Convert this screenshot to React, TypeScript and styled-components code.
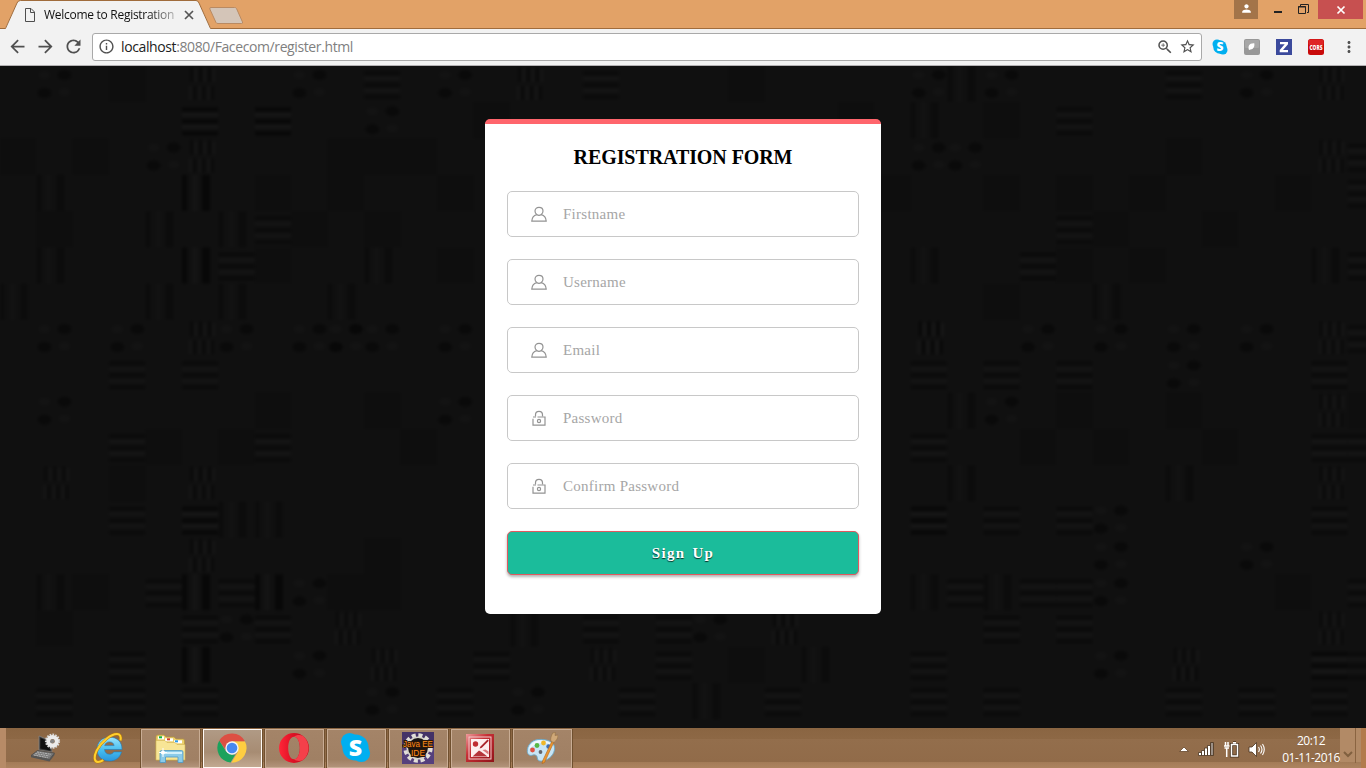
import React from 'react';
import styled, { createGlobalStyle } from 'styled-components';
import { MdArrowBack, MdArrowForward, MdRefresh, MdInfoOutline, MdZoomIn, MdStarBorder, MdMoreVert, MdPerson } from 'react-icons/md';

const GlobalStyle = createGlobalStyle`
  * { box-sizing: border-box; }
  body { margin: 0; overflow: hidden; background: #101010; }
  svg { display: block; flex: none; }
`;

const Screen = styled.div`
  width: 1366px;
  height: 768px;
  display: flex;
  flex-direction: column;
  overflow: hidden;
`;

/* ---------- browser chrome ---------- */

const TitleBar = styled.header`
  height: 29px;
  flex: none;
  display: flex;
  align-items: flex-start;
  background: #e2a267;
  box-shadow: inset 0 -1px 0 #a06c3c;
`;

const Tab = styled.div`
  position: relative;
  width: 209px;
  height: 29px;
  padding: 1px 0 0 25px;
  display: flex;
  align-items: center;
`;

const TabShape = styled.svg`
  position: absolute;
  left: 0;
  top: 0;
`;

const TabTitle = styled.span`
  position: relative;
  width: 131px;
  margin: 0 8px 0 9px;
  overflow: hidden;
  white-space: nowrap;
  font: 12px/18px 'Open Sans', sans-serif;
  letter-spacing: -0.28px;
  color: #111;
  mask-image: linear-gradient(to right, #000 104px, rgba(0, 0, 0, 0.3) 130px);
`;

const TabIcon = styled.svg`
  position: relative;
`;

const NewTab = styled.svg`
  margin-top: 7px;
`;

const WindowControls = styled.div`
  margin-left: auto;
  padding-right: 3px;
  display: flex;
`;

const WindowButton = styled.div<{ $width: number; $fill?: string }>`
  width: ${(p) => p.$width}px;
  height: 19px;
  display: flex;
  align-items: center;
  justify-content: center;
  background: ${(p) => p.$fill ?? 'transparent'};
`;

const ProfileButton = styled(WindowButton)`
  padding-bottom: 3px;
`;

const Toolbar = styled.div`
  height: 37px;
  flex: none;
  display: flex;
  align-items: center;
  padding: 0 8px 1px 7px;
  background: #f2f2f2;
  border-bottom: 1px solid #b3b1b3;
  color: #505050;
`;

const NavButtons = styled.div`
  display: flex;
  gap: 7px;
  width: 85px;
`;

const AddressBar = styled.div`
  width: 1110px;
  height: 28px;
  display: flex;
  align-items: center;
  padding: 0 5px;
  background: #fff;
  border: 1px solid #a9a9a9;
  border-radius: 3px;
`;

const Url = styled.span`
  margin-left: 6px;
  font: 14px/20px 'Open Sans', sans-serif;
  letter-spacing: -0.39px;
  color: #808080;
  white-space: nowrap;
  b { font-weight: 400; color: #222; }
`;

const AddressActions = styled.div`
  margin-left: auto;
  display: flex;
  gap: 5px;
`;

const Extensions = styled.div`
  margin-left: 10px;
  display: flex;
  align-items: center;
  gap: 16px;
`;

/* ---------- page ---------- */

const Page = styled.main`
  position: relative;
  flex: 1;
  display: flex;
  justify-content: center;
  align-items: flex-start;
  padding-top: 53px;
  background: #101010;
`;

const Texture = styled.svg`
  position: absolute;
  left: 0;
  top: 0;
`;

const Card = styled.form`
  position: relative;
  width: 396px;
  height: 495px;
  padding: 0 22px;
  border-top: 5px solid #ff656c;
  border-radius: 5px;
  background: #fff;
  font-family: 'Liberation Serif', serif;
`;

const Heading = styled.h1`
  margin: 0;
  height: 67px;
  font-size: 20px;
  line-height: 66px;
  letter-spacing: -0.08px;
  font-weight: 700;
  text-align: center;
  color: #000;
  white-space: nowrap;
`;

const Field = styled.label`
  height: 46px;
  margin-bottom: 22px;
  padding-left: 23px;
  display: flex;
  align-items: center;
  border: 1px solid #c8c8c8;
  border-radius: 5px;
`;

const Input = styled.input`
  flex: 1;
  min-width: 0;
  margin-left: 16px;
  padding: 0;
  border: 0;
  outline: 0;
  background: transparent;
  font: 15px/18px 'Liberation Serif', serif;
  letter-spacing: 0.26px;
  &::placeholder { color: #a6a6a6; opacity: 1; }
`;

const Submit = styled.button`
  display: block;
  width: 100%;
  height: 44px;
  padding: 0;
  border: 1px solid #e15960;
  border-radius: 5px;
  background: #1bbc9b;
  box-shadow: 0 2px 3px rgba(0, 0, 0, 0.3);
  font: bold 15px/18px 'Liberation Serif', serif;
  letter-spacing: 1.3px;
  word-spacing: 2px;
  color: #fff;
  text-shadow: 0 1px 1px rgba(0, 0, 0, 0.75);
`;

/* ---------- taskbar ---------- */

const Taskbar = styled.footer`
  height: 40px;
  flex: none;
  display: flex;
  align-items: flex-start;
  padding: 0 0 0 6px;
  background:
    linear-gradient(#b27b4c, #b27b4c) 1361px 0 / 5px 40px no-repeat,
    linear-gradient(#8a6441, #8a6441) 1355px 0 / 1px 35px no-repeat,
    linear-gradient(#b28a66, #b28a66) 1340px 0 / 21px 34px no-repeat,
    linear-gradient(#b78b67, #b78b67) 0 0 / 6px 40px no-repeat,
    linear-gradient(#a37b57, #ad845f) 0 34px / 1361px 6px no-repeat,
    linear-gradient(#8a6542 0, #8d6845 11px, #936e4c 11px, #916b49 34px);
`;

const Launcher = styled.div<{ $width: number }>`
  width: ${(p) => p.$width}px;
  height: 39px;
  display: flex;
  align-items: center;
  justify-content: center;
`;

const TaskButtons = styled.div`
  display: flex;
  gap: 3px;
  padding-top: 1px;
`;

const TaskButton = styled.div<{ $active?: boolean }>`
  width: 59px;
  height: 39px;
  display: flex;
  align-items: center;
  justify-content: center;
  padding: 0 2px 2px 0;
  border: 1px solid ${(p) => (p.$active ? '#fffaf6' : '#c9ad95')};
  background: ${(p) =>
    p.$active
      ? 'linear-gradient(#b09a85, #a78c73 60%, #c2a991)'
      : 'linear-gradient(#a48468, #a08064 80%, #b2937a)'};
  box-shadow: 1px 0 0 #70502f, -1px 0 0 #70502f;
`;

const Tray = styled.div`
  margin-left: auto;
  display: flex;
  align-items: center;
  height: 40px;
`;

const TrayIcons = styled.div`
  display: flex;
  align-items: center;
  gap: 8px;
  padding-top: 2px;
`;

const Clock = styled.div`
  width: 62px;
  margin-left: 15px;
  font: 12px/17px 'Open Sans', sans-serif;
  letter-spacing: -0.5px;
  color: #fff;
  text-align: center;
  white-space: nowrap;
  padding-top: 2px;
`;

const Chevron = styled.svg`
  margin-top: 14px;
`;

/* ---------- texture ---------- */

// One string per row of blocks; each entry is a column number and a pattern letter:
// h stripes across, v stripes down, w broken stripes, x blotches, d darker patch.
const rows = [
  '1x 3d 5w 8x 10h 12x 14w 16h 20d 25x 26v 27x 32h 34x 36w',
  '5H 7H 10x 13d 23d 25v 27d 29h',
  '0d 2d 4x 5w 9d 10d 11d 25x 26x 32d 36w 37h',
  '1v 5V 7d 9d 12d 24d 27d 29d 31d 35d 37h',
  '1d 4v 6v 7h 8d 10d 29h 30d 33d',
  '1v 5V 6h 7d 10v 12d 25v 28h 29d 31d 36v 37h',
  '0v 4v 6v 9v 27d 30v',
  '1x 3x 5w 6x 8x 9X 10x 12x 25W 28x 30x 32x 34x 36w 37h',
  '3h 5h 25h 27h 29h 32x 36h',
  '1x 7d 10d 12x 26v 27x 29d 32d 36w 37d',
  '3h 4d 6d 7h 11d 25h 28d 30d 33d 36h 37h',
  '1w 3d 5w 26v 32v 36w',
  '3h 5H 6v 7v 25H 27h 29h 30x 36h',
  '5w 10d 30x 34x',
  '1v 2d 4h 5V 6h 7V 8x 9d 10d 25v 26h 27v 28h 29h 30x 35d 37h',
  '1d 5h 6x 7h 9w 14v 16h 18h 19x 21w 27h 29h 36w',
  '3h 5V 8x 10w 13h 16w 18h 20d 22v 25h 30x 32w 36H 37h',
  '1h 3h 5h 10x 12h 14x 17h 19v 21h 25h 27h 32h 34h 36h',
];

const dark = '#050505';
const light = '#1c1c1c';

function Patch({ kind }: { kind: string }) {
  switch (kind.toLowerCase()) {
    case 'h':
      return (
        <g>
          {[5, 17, 29].map((y) => <rect key={y} x="0" y={y} width="36" height="4" fill={dark} />)}
          {[11, 23].map((y) => <rect key={y} x="0" y={y} width="36" height="3" fill={light} />)}
        </g>
      );
    case 'v':
      return (
        <g>
          <rect x="0" y="0" width="5" height="36" fill={dark} />
          <rect x="10" y="0" width="5" height="36" fill={light} opacity=".6" />
          <rect x="20" y="0" width="8" height="36" fill={dark} />
        </g>
      );
    case 'w':
      return (
        <g>
          {[8, 17, 26].map((x) => (
            <g key={x}>
              <rect x={x} y="1" width="3" height="15" fill={dark} />
              <rect x={x + 4} y="3" width="3" height="13" fill={light} />
              <rect x={x + 3} y="20" width="3" height="14" fill={dark} />
              <rect x={x - 1} y="20" width="3" height="14" fill={light} />
            </g>
          ))}
        </g>
      );
    case 'x':
      return (
        <g>
          <ellipse cx="28" cy="9" rx="7" ry="5" fill={dark} />
          <ellipse cx="8" cy="27" rx="7" ry="5" fill={dark} />
          <ellipse cx="8" cy="9" rx="6" ry="4" fill={light} opacity=".5" />
          <ellipse cx="28" cy="26" rx="6" ry="4" fill={light} opacity=".5" />
        </g>
      );
    default:
      return <rect width="36" height="36" fill="#0c0c0c" />;
  }
}

function opacityOf(kind: string) {
  if (kind === 'd') return 0.5;
  if (kind === 'x') return 0.5;
  if (kind === 'v') return 0.3;
  return kind === kind.toLowerCase() ? 0.45 : 0.65;
}

function PageTexture() {
  return (
    <Texture width="1366" height="662" viewBox="0 0 1366 662">
      <defs>
        <filter id="soften" filterUnits="userSpaceOnUse" x="0" y="0" width="1366" height="662" colorInterpolationFilters="sRGB">
          <feGaussianBlur stdDeviation="1.8" />
        </filter>
      </defs>
      <g filter="url(#soften)">
        <rect x="-20" y="-20" width="1406" height="702" fill="#101010" />
        {rows.flatMap((row, r) =>
          row.split(' ').map((cell) => {
            const kind = cell.slice(-1);
            const col = parseInt(cell, 10);
            return (
              <g key={r + cell} transform={`translate(${col * 36.43} ${r * 36.3})`} opacity={opacityOf(kind)}>
                <Patch kind={kind} />
              </g>
            );
          }),
        )}
      </g>
    </Texture>
  );
}

/* ---------- drawings ---------- */

const UserIcon = () => (
  <svg width="16" height="16" viewBox="0 0 16 16" fill="none" stroke="#939393" strokeWidth="1.2">
    <path d="M5.7 8.6C4.500 7.700 4 6.500 4 5.100 4 2.900 5.600 1.400 8 1.400s4 1.500 4 3.700c0 1.400-.5 2.600-1.700 3.500" />
    <path d="M5.700 8.600C2.800 9.400 1 11.500 .8 15.100h14.400C15 11.500 13.200 9.400 10.300 8.600 8.900 9.500 7.100 9.500 5.700 8.600" />
  </svg>
);

const LockIcon = () => (
  <svg width="16" height="16" viewBox="0 0 16 16" fill="none" stroke="#939393" strokeWidth="1.2">
    <path d="M4.500 6.500V4.800C4.500 2.700 6 1.300 8 1.300s3.500 1.400 3.500 3.500V6.500" />
    <path d="M2 7h3M6.500 7h7.500v8.200H2V8.800" />
    <circle cx="8" cy="11" r="1.600" />
  </svg>
);

const SkypeIcon = ({ size }: { size: number }) => (
  <svg width={size} height={size} viewBox="0 0 32 32">
    <circle cx="10" cy="10" r="9" fill="#00aff0" />
    <circle cx="22" cy="22" r="9" fill="#00aff0" />
    <circle cx="16" cy="16" r="13.500" fill="#00aff0" />
    <text x="16" y="24.500" textAnchor="middle" fontFamily="Open Sans, sans-serif" fontWeight="800" fontSize="24" fill="#fff">S</text>
  </svg>
);

const LeafExtension = () => (
  <svg width="16" height="16" viewBox="0 0 16 16">
    <rect width="16" height="16" rx="2" fill="#989898" />
    <rect x="1" y="1" width="14" height="8" rx="1" fill="#b0b0b0" opacity=".6" />
    <path d="M5 11C3.800 7.500 5 4 10.300 4.300c.5 3.400-.8 6-3.800 6.200z" fill="#fff" />
  </svg>
);

const ZExtension = () => (
  <svg width="16" height="16" viewBox="0 0 16 16">
    <rect width="16" height="16" fill="#3b4a9c" />
    <path d="M4 3h8v2.200L7 11h5v2.200H3.700V11l5-5.800H4z" fill="#fff" />
  </svg>
);

const CorsExtension = () => (
  <svg width="16" height="16" viewBox="0 0 16 16">
    <rect width="16" height="16" rx="2.500" fill="#c90a0a" />
    <rect x="0.500" y="0.500" width="15" height="6" rx="2" fill="#df2626" />
    <text x="8" y="10.800" textAnchor="middle" textLength="13" lengthAdjust="spacingAndGlyphs" fontFamily="Open Sans, sans-serif" fontWeight="800" fontSize="7.500" fill="#fff">CORS</text>
  </svg>
);

const LaptopIcon = () => (
  <svg width="32" height="30" viewBox="0 0 32 30">
    <path d="M9 3l12 5 1 11-13-2z" fill="#3b3b3b" stroke="#888" strokeWidth=".7" />
    <path d="M10.500 5l9 4 .6 8.500-9.800-2z" fill="#111" />
    <path d="M7.500 17.500l17 2.500-5 6.500L1 22.500z" fill="#777" stroke="#444" strokeWidth=".7" />
    <path d="M1 22.500l18.500 4v2L1 24.200zM19.500 26.500l5-6.500v2l-5 6.500z" fill="#555" />
    <path d="M7 19l14 2.300M5.300 20.500l14 2.500M3.800 22l14 2.700" stroke="#c4c4c4" strokeWidth=".8" strokeDasharray="2 .7" />
    <circle cx="22.500" cy="8.200" r="6.600" fill="none" stroke="#d8d8d8" strokeWidth="2" strokeDasharray="1.700 1.100" />
    <circle cx="22.500" cy="8.200" r="4.300" fill="none" stroke="#ececec" strokeWidth="4" />
    <circle cx="22.500" cy="8.200" r="1.900" fill="#858585" />
  </svg>
);

const ExplorerE = () => (
  <svg width="32" height="32" viewBox="0 0 32 32">
    <defs>
      <linearGradient id="ieBlue" x1="0" y1="0" x2="0" y2="1">
        <stop offset="0" stopColor="#9be4fb" />
        <stop offset=".55" stopColor="#45bdf0" />
        <stop offset="1" stopColor="#2a96dc" />
      </linearGradient>
    </defs>
    <path d="M30 17.500H12.500c.3 3 2.200 4.700 5 4.700 2 0 3.400-.8 4.200-2.300h7.800C27.800 25.800 23.500 29 17.400 29 10 29 5 24.300 5 17.300 5 10.200 10 5.200 17.500 5.200c7.800 0 12.600 4.800 12.500 12.300zM12.700 13.600h9.400c-.4-2.400-2-3.700-4.600-3.700-2.500 0-4.200 1.300-4.800 3.700z" fill="url(#ieBlue)" stroke="#1f7dc0" strokeWidth=".6" />
    <path d="M28.500 8.500C29.300 4.500 28 2 25 2 19 2 9.500 9.500 4.700 18.500 1.700 24.500 2 29.600 5.800 30c1.500.1 3.500-.6 5.500-1.800" fill="none" stroke="#b97a08" strokeWidth="2.900" />
    <path d="M28.500 8.500C29.300 4.500 28 2 25 2 19 2 9.500 9.500 4.700 18.500 1.700 24.500 2 29.600 5.800 30c1.500.1 3.500-.6 5.500-1.800" fill="none" stroke="#ffcf2e" strokeWidth="2" />
  </svg>
);

const FolderIcon = () => (
  <svg width="32" height="32" viewBox="0 0 32 32">
    <path d="M2 28V5q0-2 2-2h6l2 2h8l2 2h7q1.500 0 1.500 2v19z" fill="#ecd06c" stroke="#b99a3d" strokeWidth=".7" />
    <path d="M4 4.300h6v3H4z" fill="#fff" /><path d="M5 4.300h3v2H5z" fill="#0fb43d" />
    <path d="M11 6.300h8v3h-8z" fill="#fff" /><path d="M13 6.300h3v2h-3z" fill="#d53b2d" />
    <path d="M20 8.300h8v3h-8z" fill="#fff" /><path d="M21 8.300h3v2h-3z" fill="#2e9be9" />
    <path d="M2 8.500h9l2 2h8l2 2h8V28H2z" fill="#f8e596" stroke="#d2b456" strokeWidth=".6" />
    <path d="M6 30.500V20q0-1.500 1.500-1.500h20Q29 18.500 29 20v10.500h-5V25H11.500v5.500z" fill="#8bcbe9" stroke="#4b99c6" strokeWidth=".8" />
    <path d="M7 20h21v2H7z" fill="#d2f0fb" />
    <path d="M9 16v9M5 20.500h8" stroke="#fff" strokeWidth="1" />
    <circle cx="9" cy="20.500" r="2" fill="#fff" />
  </svg>
);

const ChromeIcon = () => (
  <svg width="30" height="30" viewBox="0 0 30 30">
    <path d="M15 8.200h12.900A14.700 14.700 0 0 1 14.400 29.700L21 18.500z" fill="#fecd41" />
    <path d="M2.300 7.600L9 18.500l6 3.300 3.300-.4-4.800 8.200A14.700 14.700 0 0 1 2.300 7.600z" fill="#1ba25c" />
    <path d="M2.300 7.600A14.700 14.700 0 0 1 27.900 8.200H15l-6 9z" fill="#dd4f43" />
    <circle cx="15" cy="15" r="6.700" fill="#f3f3f3" />
    <circle cx="15" cy="15" r="5.300" fill="#4688f1" />
  </svg>
);

const OperaIcon = () => (
  <svg width="32" height="32" viewBox="0 0 32 32">
    <defs>
      <linearGradient id="operaRed" x1="0" y1="0" x2="1" y2="0">
        <stop offset="0" stopColor="#ff2638" />
        <stop offset=".45" stopColor="#df1025" />
        <stop offset="1" stopColor="#b50c1a" />
      </linearGradient>
    </defs>
    <path fillRule="evenodd" d="M16 1a15 15 0 1 0 0 30 15 15 0 1 0 0-30zm0 3.700c3.600 0 5.800 5 5.800 11.300S19.600 27.300 16 27.300 10.200 22.300 10.200 16 12.400 4.700 16 4.700z" fill="url(#operaRed)" />
    <path d="M16 27.300c3.600 0 5.800-5 5.800-11.300S19.600 4.700 16 4.700c2-1.800 6-2.300 9-.7 7.500 6 7.500 18 0 24-3 1.600-7 1.200-9-.7z" fill="#f4404a" />
  </svg>
);

const EclipseIcon = () => (
  <svg width="32" height="32" viewBox="0 0 32 32">
    <rect width="32" height="32" fill="#443267" />
    <rect y="16" width="32" height="16" fill="#55407d" />
    <circle cx="16" cy="16" r="12.700" fill="none" stroke="#e1ded8" strokeWidth="4" strokeDasharray="4 2.650" />
    <circle cx="16" cy="16" r="10.700" fill="#191415" stroke="#d8d4cc" strokeWidth="1.600" />
    <text x="16" y="14.800" textAnchor="middle" textLength="30" lengthAdjust="spacingAndGlyphs" fontFamily="Liberation Sans, sans-serif" fontSize="9.500" fill="#ff8b1a" stroke="#2a1608" strokeWidth="2" paintOrder="stroke">Java EE</text>
    <text x="16" y="24" textAnchor="middle" textLength="14" lengthAdjust="spacingAndGlyphs" fontFamily="Liberation Sans, sans-serif" fontSize="9.500" fill="#ff8b1a" stroke="#2a1608" strokeWidth="2" paintOrder="stroke">IDE</text>
  </svg>
);

const PictureManagerIcon = () => (
  <svg width="28" height="28" viewBox="0 0 28 28">
    <defs>
      <linearGradient id="pictureRed" x1="0" y1="0" x2="1" y2="1">
        <stop offset="0" stopColor="#ef9b9b" />
        <stop offset=".4" stopColor="#c52f35" />
        <stop offset="1" stopColor="#8f1218" />
      </linearGradient>
    </defs>
    <rect width="28" height="28" fill="url(#pictureRed)" />
    <rect x="3" y="3" width="22" height="22" fill="none" stroke="#f4cccc" />
    <path d="M5 5h18v18H5z" fill="#fdeeee" />
    <path d="M6.500 22.500l6.500-6 2.500 1.500 6 4.500z" fill="#b5343a" />
    <circle cx="9.500" cy="10" r="2.700" fill="#bf2c31" />
    <path d="M14.500 12.500L21.500 5.500l1.300 1.300-7 7-2.200.8z" fill="#a92329" />
    <path d="M16.500 16l6 4.500v-3l-3-2z" fill="#d9787c" />
  </svg>
);

const PaintIcon = () => (
  <svg width="32" height="32" viewBox="0 0 32 32">
    <path d="M12 7.500C5.500 8.200 1 13.500 1.300 19.500c.2 3.600 3.200 4.400 5.300 3.600 2.500-1 4.600.2 4.700 2.900.1 2.700 2.600 3.700 6.300 2.800 6.300-1.500 11-6.800 11-12.700 0-5.700-6.300-9.400-16.600-8.600z" fill="#c8e5f5" stroke="#6baacb" strokeWidth=".9" />
    <path d="M12 8.500C6.500 9.500 3 14 3.200 17c7-7 15-7.500 23-4-3-3.800-8-5.200-14.200-4.500z" fill="#fff" opacity=".7" />
    <circle cx="6.500" cy="18" r="2.400" fill="#df5140" />
    <circle cx="11" cy="13.500" r="2.400" fill="#56b845" />
    <circle cx="17.500" cy="11" r="2.400" fill="#efb728" />
    <circle cx="22.500" cy="14.500" r="2.200" fill="#3e6fb3" />
    <circle cx="14.500" cy="20" r="1.900" fill="#63666c" />
    <path d="M26 9l2 .8L18.500 30.500l-2.500 1 .7-2.800z" fill="#ed9630" stroke="#ae651a" strokeWidth=".6" />
    <path d="M25 9.500c-1-3 .5-6 1.700-8.500L29.500.500l-.5 3 3-.5c.2 3-1.500 5.500-4 7.500z" fill="#cfa878" stroke="#967044" strokeWidth=".6" />
  </svg>
);

const taskIcons = [
  { id: 'files', icon: <FolderIcon /> },
  { id: 'chrome', icon: <ChromeIcon />, active: true },
  { id: 'opera', icon: <OperaIcon /> },
  { id: 'skype', icon: <SkypeIcon size={31} /> },
  { id: 'eclipse', icon: <EclipseIcon /> },
  { id: 'pictures', icon: <PictureManagerIcon /> },
  { id: 'paint', icon: <PaintIcon /> },
];

const fields = [
  { label: 'Firstname', icon: <UserIcon /> },
  { label: 'Username', icon: <UserIcon /> },
  { label: 'Email', icon: <UserIcon /> },
  { label: 'Password', icon: <LockIcon />, secret: true },
  { label: 'Confirm Password', icon: <LockIcon />, secret: true },
];

export default function App() {
  return (
    <Screen>
      <GlobalStyle />
      <TitleBar>
        <Tab>
          <TabShape width="216" height="29" viewBox="0 0 216 29">
            <path d="M5 29L17 3Q18 .5 20.500 .5H196Q198 .5 199 3L211 29z" fill="#f2f2f2" />
            <path d="M0 28.500H5.500L17 3Q18 .5 20.500 .5H196Q198 .5 199 3L210.500 28.500H216" fill="none" stroke="#a06c3c" />
          </TabShape>
          <TabIcon width="10" height="14" viewBox="0 0 10 14" fill="none" stroke="#4e4e4e">
            <path d="M.5.500H6L9.500 4v9.500H.5zM5.500.500V4.500h4" />
          </TabIcon>
          <TabTitle>Welcome to Registration</TabTitle>
          <TabIcon width="12" height="12" viewBox="0 0 12 12" stroke="#555" strokeWidth="1.700">
            <path d="M2 2l8 8M10 2l-8 8" />
          </TabIcon>
        </Tab>
        <NewTab width="35" height="18" viewBox="0 0 35 18">
          <path d="M2 .5H25.500Q27 .5 27.500 1.500L33.500 15Q34 16.500 32.500 16.500H9Q7.500 16.500 7 15.500L.8 2Q.3.500 2 .5z" fill="#d4c5b8" stroke="#b98a62" />
        </NewTab>
        <WindowControls>
          <ProfileButton $width={24} $fill="#a37449"><MdPerson size={13} color="#fff" /></ProfileButton>
          <WindowButton $width={38}>
            <svg width="16" height="19"><rect x="5" y="11" width="8" height="2" fill="#222" /></svg>
          </WindowButton>
          <WindowButton $width={22}>
            <svg width="22" height="19" fill="none" stroke="#222">
              <path d="M4.500 6V4.500h8v8H11" /><path d="M2.500 6.500h7v7h-7z" /><path d="M2 7h8" />
            </svg>
          </WindowButton>
          <WindowButton $width={45} $fill="#c75050">
            <svg width="10" height="10" viewBox="0 0 10 10" stroke="#fff" strokeWidth="1.700"><path d="M1.500 1.500l7 7M8.500 1.500l-7 7" /></svg>
          </WindowButton>
        </WindowControls>
      </TitleBar>

      <Toolbar>
        <NavButtons>
          <MdArrowBack size={21} />
          <MdArrowForward size={21} />
          <MdRefresh size={21} />
        </NavButtons>
        <AddressBar>
          <MdInfoOutline size={17} />
          <Url><b>localhost</b>:8080/Facecom/register.html</Url>
          <AddressActions>
            <MdZoomIn size={18} />
            <MdStarBorder size={17} />
          </AddressActions>
        </AddressBar>
        <Extensions>
          <SkypeIcon size={16} />
          <LeafExtension />
          <ZExtension />
          <CorsExtension />
          <MdMoreVert size={18} />
        </Extensions>
      </Toolbar>

      <Page>
        <PageTexture />
        <Card>
          <Heading>REGISTRATION FORM</Heading>
          {fields.map((f) => (
            <Field key={f.label}>
              {f.icon}
              <Input type={f.secret ? 'password' : 'text'} placeholder={f.label} />
            </Field>
          ))}
          <Submit type="button">Sign Up</Submit>
        </Card>
      </Page>

      <Taskbar>
        <Launcher $width={79}><LaptopIcon /></Launcher>
        <Launcher $width={46}><ExplorerE /></Launcher>
        <Launcher $width={10} />
        <TaskButtons>
          {taskIcons.map((t) => (
            <TaskButton key={t.id} $active={t.active}>{t.icon}</TaskButton>
          ))}
        </TaskButtons>
        <Tray>
          <TrayIcons>
            <svg width="12" height="10" viewBox="0 0 12 10"><path d="M1.500 7.500L6 3l4.500 4.500z" fill="#fff" stroke="#65462b" strokeWidth=".8" /></svg>
            <svg width="17" height="14" viewBox="0 0 17 14" stroke="#49331f" strokeWidth=".8" fill="#fff">
              <path d="M.5 10.500h3v3h-3zM3.500 8.500h3v5h-3zM6.500 6h3v7.500h-3zM9.500 3.500h3v10h-3z" /><path d="M12.500.500h3v13h-3z" fill="#9c9087" />
            </svg>
            <svg width="17" height="17" viewBox="0 0 17 17" fill="none" stroke="#fff" strokeWidth="1.500">
              <path d="M8.500 3.500h6v11.500h-6zM10 1.800h3" stroke="#49331f" strokeWidth="3.200" />
              <path d="M8.500 3.500h6v11.500h-6zM10 1.800h3" />
              <path d="M2.500 1v4M5 1v4M1 5h5.500M1.500 7h4.500M3.700 7v9" />
            </svg>
            <svg width="17" height="17" viewBox="0 0 17 17">
              <path d="M1 6h3l4.500-4.500v14L4 11H1z" fill="#fff" stroke="#49331f" strokeWidth=".8" />
              <path d="M10.500 6q1.700 2.500 0 5M12.500 4.500q3 4 0 8M14.500 3q3.500 5.500 0 11" fill="none" stroke="#fff" strokeWidth="1.100" />
            </svg>
          </TrayIcons>
          <Clock>20:12<br />01-11-2016</Clock>
          <Chevron width="24" height="10" viewBox="0 0 24 10" fill="none" stroke="#80603f" strokeWidth="2"><path d="M2 2l4 4 4-4" /></Chevron>
        </Tray>
      </Taskbar>
    </Screen>
  );
}
